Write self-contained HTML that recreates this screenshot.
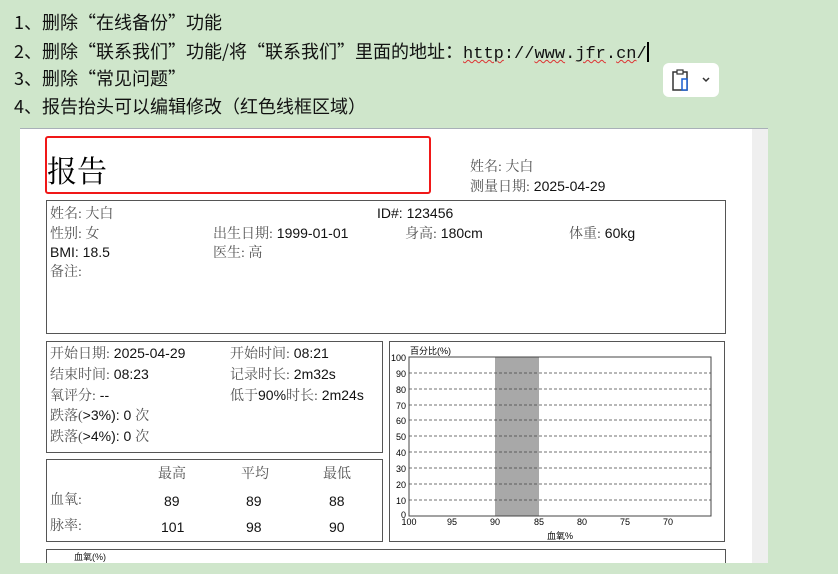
<!DOCTYPE html>
<html><head><meta charset="utf-8"><style>
html,body{margin:0;width:838px;height:574px;overflow:hidden}
body{background:#cfe6cb;position:relative;font-family:"Liberation Sans","Noto Sans CJK SC",sans-serif}
.l{position:absolute;left:14px;font-size:18px;color:#111;white-space:nowrap;line-height:20px;font-family:"Noto Sans CJK SC",sans-serif}
.mono{font-family:"Liberation Mono",monospace;font-size:17px}
.sq{text-decoration:underline wavy #d33;text-decoration-thickness:1px}
.page{position:absolute;left:20px;top:128px;width:748px;height:435px;background:#fff;border-top:1px solid #a8b0b8}
.sb{position:absolute;left:752px;top:129px;width:16px;height:434px;background:#efefef}
.a{position:absolute;white-space:nowrap;font-size:14px;color:#111;line-height:16px}
.s{font-family:"Liberation Serif","Noto Serif CJK SC",serif;color:#555}
.box{position:absolute;border:1px solid #555;background:#fff}
</style></head><body>
<div class="l" style="top:12px">1、删除“在线备份”功能</div>
<div class="l" style="top:41px">2、删除“联系我们”功能/将“联系我们”里面的地址：<span class="mono"><span class="sq">http</span>://<span class="sq">www</span>.<span class="sq">jfr</span>.<span class="sq">cn</span>/</span><span style="display:inline-block;width:2px;height:20px;background:#000;vertical-align:-4px"></span></div>
<div class="l" style="top:68px">3、删除“常见问题”</div>
<div class="l" style="top:96px">4、报告抬头可以编辑修改（红色线框区域）</div>
<div style="position:absolute;left:663px;top:63px;width:56px;height:34px;background:#fff;border-radius:6px">
<svg width="56" height="34"><rect x="10" y="9" width="14" height="18" fill="none" stroke="#333" stroke-width="1.5"/><rect x="14" y="7" width="6" height="4" fill="#fff" stroke="#333" stroke-width="1.2"/><rect x="19" y="16" width="5" height="11" fill="#fff" stroke="#1a5fd0" stroke-width="1.5"/><path d="M40 15l3 3 3-3" fill="none" stroke="#333" stroke-width="1.5"/></svg></div>
<div class="page"></div><div class="sb"></div>
<div style="position:absolute;left:45px;top:136px;width:382px;height:54px;border:2px solid #f01818;border-radius:3px"></div>
<div class="a" style="left:47px;top:155px;font-size:30px;line-height:36px;font-family:'Liberation Serif','Noto Serif CJK SC',serif;color:#000">报告</div>
<div class="a" style="left:470px;top:158px"><span class="s">姓名: 大白</span></div>
<div class="a" style="left:470px;top:178px"><span class="s">测量日期:</span> 2025-04-29</div>
<div class="box" style="left:46px;top:200px;width:678px;height:132px"></div>
<div class="a" style="left:50px;top:205px"><span class="s">姓名: 大白</span></div>
<div class="a" style="left:377px;top:205px">ID#: 123456</div>
<div class="a" style="left:50px;top:225px"><span class="s">性别: 女</span></div>
<div class="a" style="left:213px;top:225px"><span class="s">出生日期:</span> 1999-01-01</div>
<div class="a" style="left:405px;top:225px"><span class="s">身高:</span> 180cm</div>
<div class="a" style="left:569px;top:225px"><span class="s">体重:</span> 60kg</div>
<div class="a" style="left:50px;top:244px">BMI: 18.5</div>
<div class="a" style="left:213px;top:244px"><span class="s">医生: 高</span></div>
<div class="a" style="left:50px;top:263px"><span class="s">备注:</span></div>
<div class="box" style="left:46px;top:341px;width:335px;height:110px"></div>
<div class="a" style="left:50px;top:345px"><span class="s">开始日期:</span> 2025-04-29</div>
<div class="a" style="left:230px;top:345px"><span class="s">开始时间:</span> 08:21</div>
<div class="a" style="left:50px;top:366px"><span class="s">结束时间:</span> 08:23</div>
<div class="a" style="left:230px;top:366px"><span class="s">记录时长:</span> 2m32s</div>
<div class="a" style="left:50px;top:387px"><span class="s">氧评分:</span> --</div>
<div class="a" style="left:230px;top:387px"><span class="s">低于</span>90%<span class="s">时长:</span> 2m24s</div>
<div class="a" style="left:50px;top:407px"><span class="s">跌落(</span>&gt;3%): 0 <span class="s">次</span></div>
<div class="a" style="left:50px;top:428px"><span class="s">跌落(</span>&gt;4%): 0 <span class="s">次</span></div>
<div class="box" style="left:46px;top:459px;width:335px;height:81px"></div>
<div class="a s" style="left:158px;top:467px">最高</div><div class="a s" style="left:241px;top:467px">平均</div><div class="a s" style="left:323px;top:467px">最低</div>
<div class="a s" style="left:50px;top:493px">血氧:</div>
<div class="a" style="left:164px;top:493px">89</div><div class="a" style="left:246px;top:493px">89</div><div class="a" style="left:329px;top:493px">88</div>
<div class="a s" style="left:50px;top:519px">脉率:</div>
<div class="a" style="left:161px;top:519px">101</div><div class="a" style="left:246px;top:519px">98</div><div class="a" style="left:329px;top:519px">90</div>
<svg style="position:absolute;left:389px;top:341px" width="337" height="202" font-family="Liberation Sans,Noto Sans CJK SC,sans-serif" font-size="9">
<rect x="0.5" y="0.5" width="335" height="200" fill="#fff" stroke="#555"/>
<text x="21" y="13" font-size="9">百分比(%)</text>
<rect x="106" y="16" width="44" height="159" fill="#a8a8a8"/>
<g stroke="#444" stroke-dasharray="3,2" stroke-width="0.8">
<line x1="20" x2="322" y1="32" y2="32"/><line x1="20" x2="322" y1="48" y2="48"/><line x1="20" x2="322" y1="64" y2="64"/><line x1="20" x2="322" y1="79" y2="79"/><line x1="20" x2="322" y1="95" y2="95"/><line x1="20" x2="322" y1="111" y2="111"/><line x1="20" x2="322" y1="127" y2="127"/><line x1="20" x2="322" y1="143" y2="143"/><line x1="20" x2="322" y1="159" y2="159"/></g>
<rect x="20" y="16" width="302" height="159" fill="none" stroke="#444"/>
<g text-anchor="end"><text x="17" y="20">100</text><text x="17" y="36">90</text><text x="17" y="52">80</text><text x="17" y="68">70</text><text x="17" y="83">60</text><text x="17" y="99">50</text><text x="17" y="115">40</text><text x="17" y="131">30</text><text x="17" y="147">20</text><text x="17" y="163">10</text><text x="17" y="177">0</text></g>
<g text-anchor="middle"><text x="20" y="184">100</text><text x="63" y="184">95</text><text x="106" y="184">90</text><text x="150" y="184">85</text><text x="193" y="184">80</text><text x="236" y="184">75</text><text x="279" y="184">70</text>
<text x="171" y="198">血氧%</text></g>
</svg>
<div class="box" style="left:46px;top:549px;width:678px;height:14px;border-bottom:none"></div>
<div class="a" style="left:74px;top:551px;font-size:9px;line-height:12px">血氧(%)</div>
<div style="position:absolute;left:0;top:563px;width:838px;height:11px;background:#cfe6cb"></div>
</body></html>
